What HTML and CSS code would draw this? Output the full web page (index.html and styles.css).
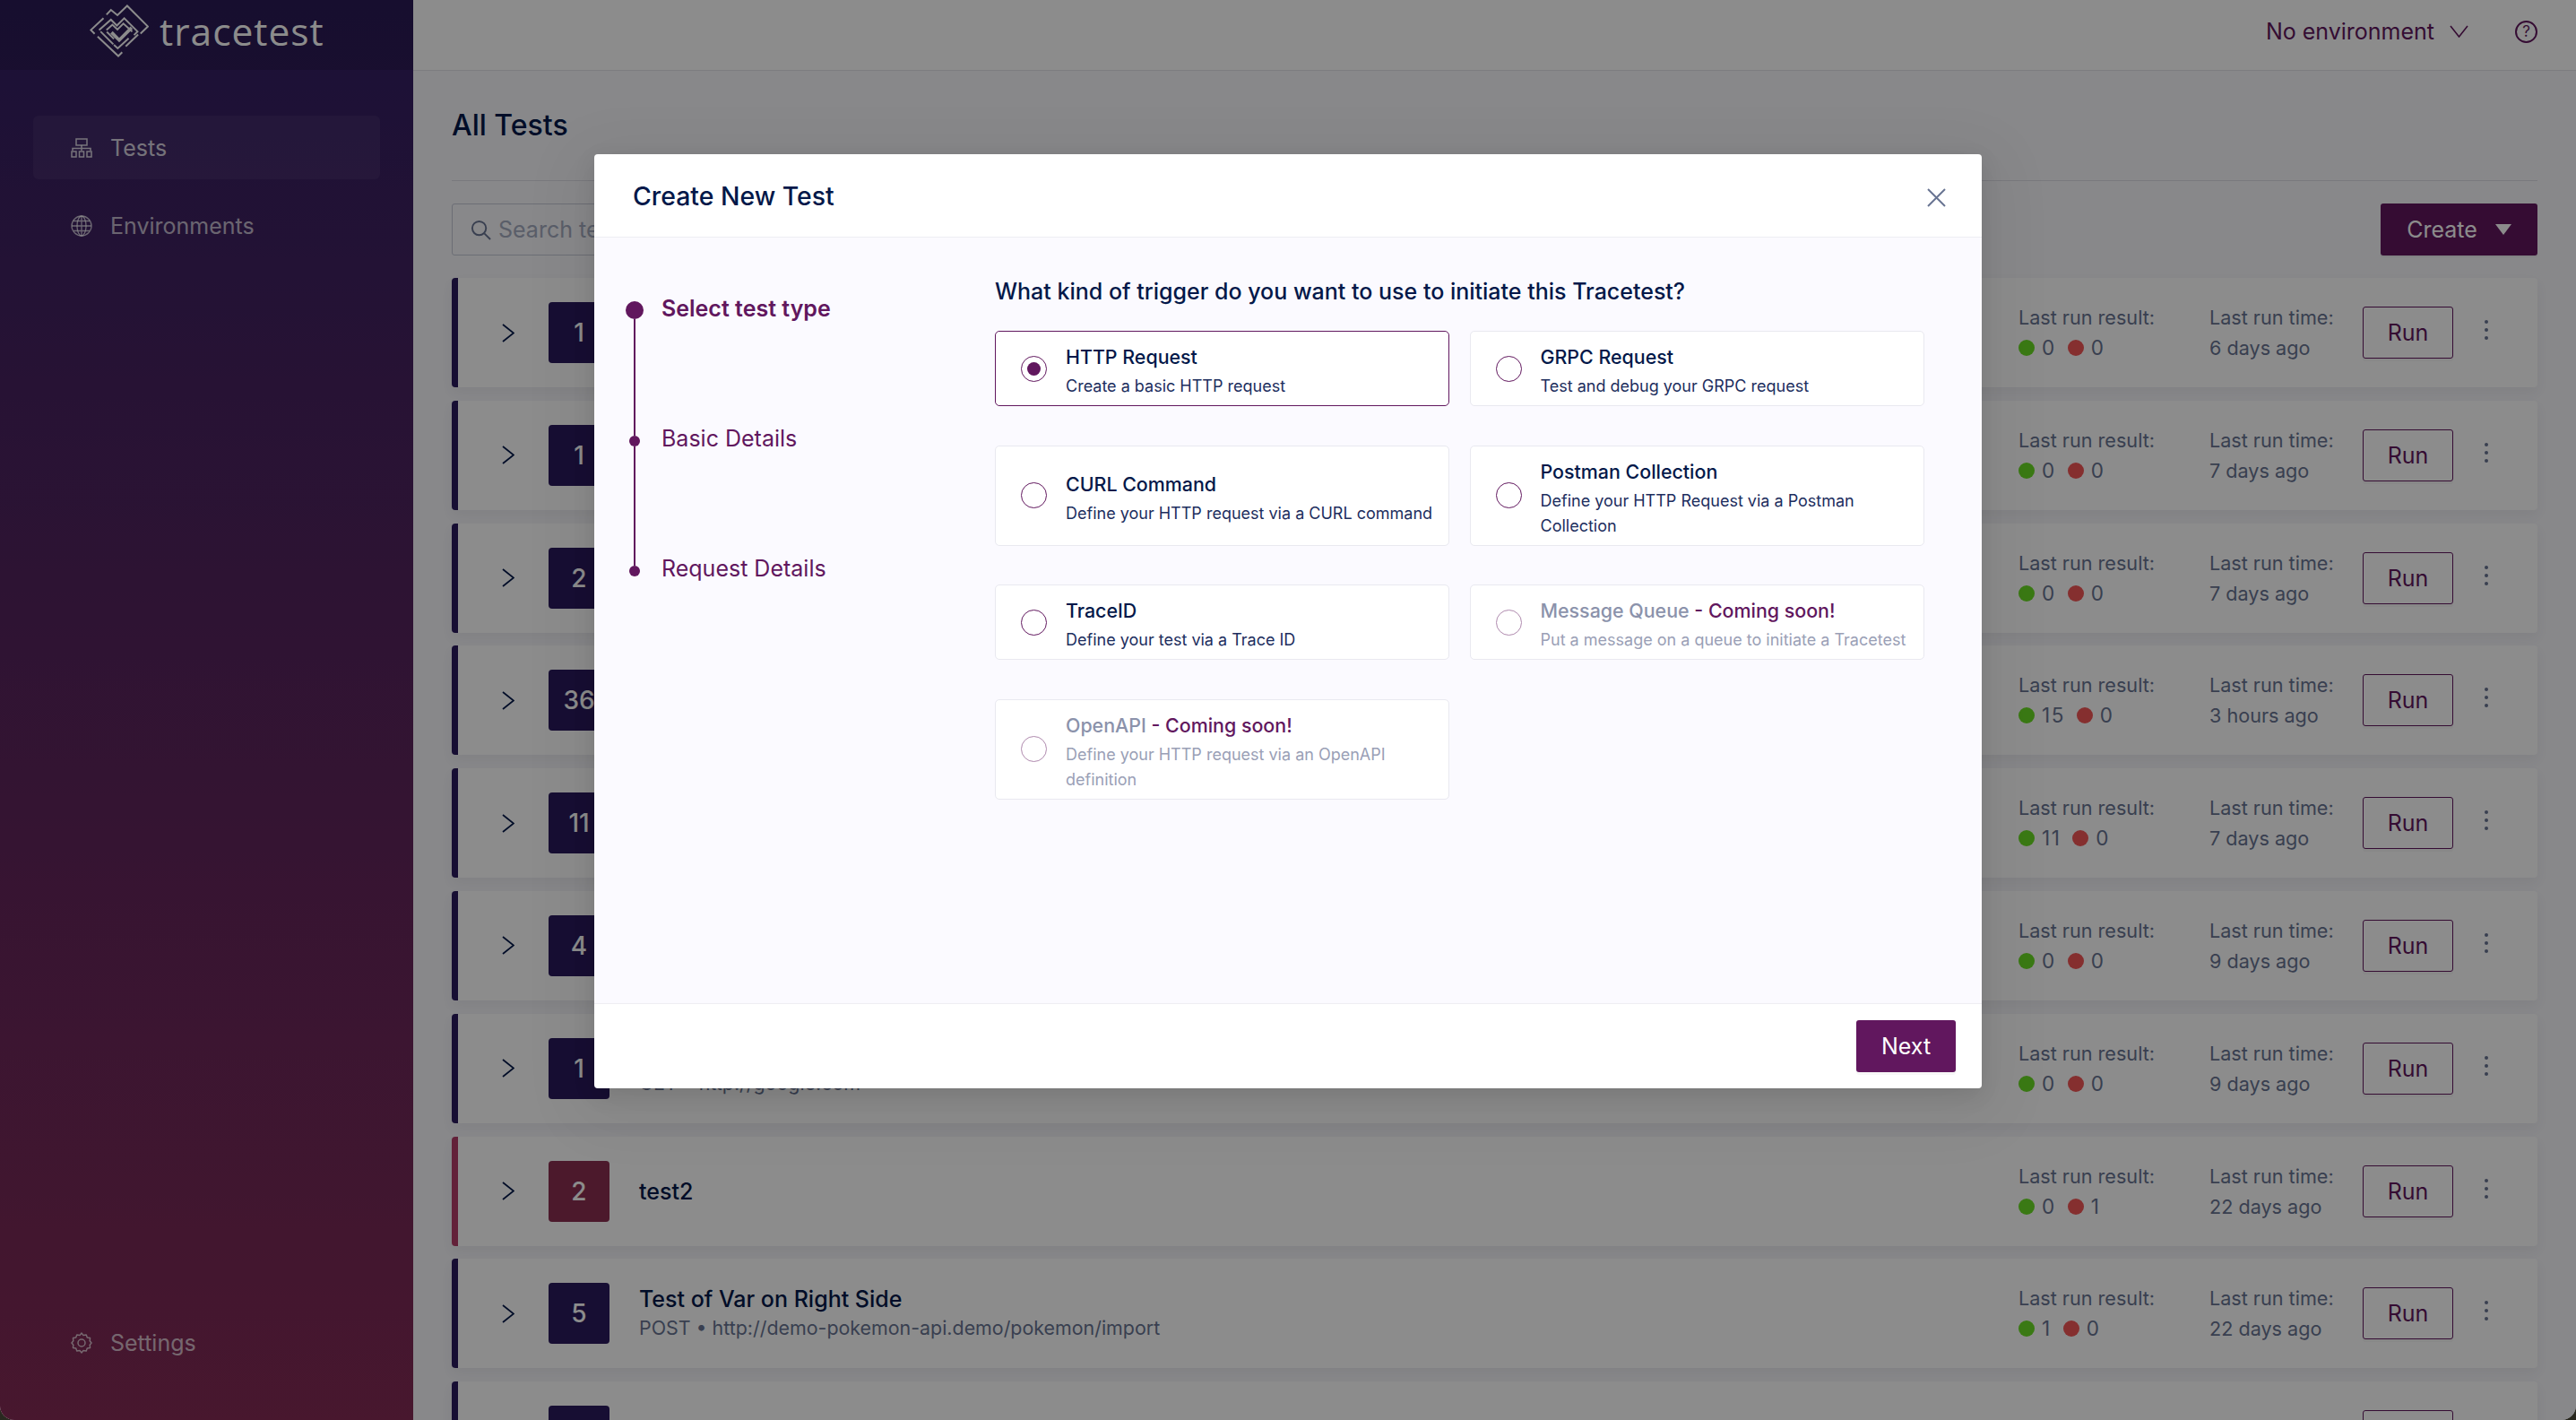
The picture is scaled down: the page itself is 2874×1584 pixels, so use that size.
FILE: index.html
```html
<!DOCTYPE html>
<html lang="en">
<head>
<meta charset="UTF-8">
<meta name="viewport" content="width=device-width, initial-scale=1.0">
<title>Tracetest</title>
<link rel="stylesheet" href="styles.css">
</head>
<body>
<div class="app">
  <aside class="sidebar">
    <div class="logo">
      <svg class="logo-mark" viewBox="118 14 200 178" fill="none" stroke="#fff" stroke-width="6">
        <path d="M175 48 L190 32 L212 50 L245 18 L315 88 L290 112"/>
        <path d="M165 60 L122 100 L135 113"/>
        <path d="M145 122 L215 188 L228 175"/>
        <path d="M240 155 L282 115"/>
        <path d="M150 100 L190 65 L210 85 L235 60 L280 105 L268 117"/>
        <path d="M155 105 L198 148"/>
        <path d="M200 150 L213 162 L250 128"/>
        <path d="M175 100 L195 82 L212 98 L232 78 L262 105"/>
        <path d="M176 106 L200 130"/>
        <path d="M192 108 L218 134 L260 92" stroke-width="11"/>
      </svg>
      <span class="logo-text">tracetest</span>
    </div>
    <nav class="nav">
      <a class="nav-item active">
        <svg class="nav-icon" viewBox="0 0 24 24" fill="none" stroke="currentColor" stroke-width="1.5">
          <rect x="6" y="2" width="12" height="7"/>
          <path d="M2 15 V12.5 H22 V15 M12 9 V15"/>
          <rect x="1" y="16" width="5" height="6"/>
          <rect x="9.5" y="16" width="5" height="6"/>
          <rect x="18" y="16" width="5" height="6"/>
        </svg>
        Tests
      </a>
      <a class="nav-item">
        <svg class="nav-icon" viewBox="0 0 24 24" fill="none" stroke="currentColor" stroke-width="1.3">
          <circle cx="12" cy="12" r="11"/>
          <ellipse cx="12" cy="12" rx="5" ry="11"/>
          <path d="M12 1 V23 M1 12 H23 M3 6.5 H21 M3 17.5 H21"/>
        </svg>
        Environments
      </a>
    </nav>
    <a class="nav-item settings">
      <svg class="nav-icon" viewBox="0 0 24 24" fill="none" stroke="currentColor" stroke-width="1.5">
        <path d="M12 1 L14 3.6 L17.2 3 L18.3 6.1 L21.5 6.6 L21.2 9.8 L23 12 L21.2 14.2 L21.5 17.4 L18.3 17.9 L17.2 21 L14 20.4 L12 23 L10 20.4 L6.8 21 L5.7 17.9 L2.5 17.4 L2.8 14.2 L1 12 L2.8 9.8 L2.5 6.6 L5.7 6.1 L6.8 3 L10 3.6 Z" stroke-linejoin="round"/>
        <circle cx="12" cy="12" r="4"/>
      </svg>
      Settings
    </a>
  </aside>

  <main class="main">
    <header class="topbar">
      <span class="env">No environment</span>
      <svg class="env-arrow" viewBox="0 0 21 14" fill="none" stroke="currentColor" stroke-width="1.6"><path d="M1 1 L10.5 13 L20 1"/></svg>
      <span class="help">?</span>
    </header>

    <div class="content">
      <h1 class="page-title">All Tests</h1>
      <div class="toolbar">
        <div class="search">
          <svg class="search-icon" viewBox="0 0 24 24" fill="none" stroke="currentColor" stroke-width="2"><circle cx="10" cy="10" r="8"/><path d="M16 16 L23 23"/></svg>
          Search test
        </div>
        <button class="btn-create">Create <span class="caret"></span></button>
      </div>

      <div class="list">
        <div class="row">
          <svg class="chevron" viewBox="0 0 14 21" fill="none" stroke="currentColor" stroke-width="1.8"><path d="M1 1 L13 10.5 L1 20"/></svg>
          <div class="badge">1</div>
          <div class="info"></div>
          <div class="result"><div>Last run result:</div><div class="counts"><i class="dot ok"></i>0<i class="dot bad"></i>0</div></div>
          <div class="time"><div>Last run time:</div><div class="ago">6 days ago</div></div>
          <button class="btn-run">Run</button>
          <div class="more"><i></i><i></i><i></i></div>
        </div>
        <div class="row">
          <svg class="chevron" viewBox="0 0 14 21" fill="none" stroke="currentColor" stroke-width="1.8"><path d="M1 1 L13 10.5 L1 20"/></svg>
          <div class="badge">1</div>
          <div class="info"></div>
          <div class="result"><div>Last run result:</div><div class="counts"><i class="dot ok"></i>0<i class="dot bad"></i>0</div></div>
          <div class="time"><div>Last run time:</div><div class="ago">7 days ago</div></div>
          <button class="btn-run">Run</button>
          <div class="more"><i></i><i></i><i></i></div>
        </div>
        <div class="row">
          <svg class="chevron" viewBox="0 0 14 21" fill="none" stroke="currentColor" stroke-width="1.8"><path d="M1 1 L13 10.5 L1 20"/></svg>
          <div class="badge">2</div>
          <div class="info"></div>
          <div class="result"><div>Last run result:</div><div class="counts"><i class="dot ok"></i>0<i class="dot bad"></i>0</div></div>
          <div class="time"><div>Last run time:</div><div class="ago">7 days ago</div></div>
          <button class="btn-run">Run</button>
          <div class="more"><i></i><i></i><i></i></div>
        </div>
        <div class="row">
          <svg class="chevron" viewBox="0 0 14 21" fill="none" stroke="currentColor" stroke-width="1.8"><path d="M1 1 L13 10.5 L1 20"/></svg>
          <div class="badge">36</div>
          <div class="info"></div>
          <div class="result"><div>Last run result:</div><div class="counts"><i class="dot ok"></i>15<i class="dot bad"></i>0</div></div>
          <div class="time"><div>Last run time:</div><div class="ago">3 hours ago</div></div>
          <button class="btn-run">Run</button>
          <div class="more"><i></i><i></i><i></i></div>
        </div>
        <div class="row">
          <svg class="chevron" viewBox="0 0 14 21" fill="none" stroke="currentColor" stroke-width="1.8"><path d="M1 1 L13 10.5 L1 20"/></svg>
          <div class="badge">11</div>
          <div class="info"></div>
          <div class="result"><div>Last run result:</div><div class="counts"><i class="dot ok"></i>11<i class="dot bad"></i>0</div></div>
          <div class="time"><div>Last run time:</div><div class="ago">7 days ago</div></div>
          <button class="btn-run">Run</button>
          <div class="more"><i></i><i></i><i></i></div>
        </div>
        <div class="row">
          <svg class="chevron" viewBox="0 0 14 21" fill="none" stroke="currentColor" stroke-width="1.8"><path d="M1 1 L13 10.5 L1 20"/></svg>
          <div class="badge">4</div>
          <div class="info"></div>
          <div class="result"><div>Last run result:</div><div class="counts"><i class="dot ok"></i>0<i class="dot bad"></i>0</div></div>
          <div class="time"><div>Last run time:</div><div class="ago">9 days ago</div></div>
          <button class="btn-run">Run</button>
          <div class="more"><i></i><i></i><i></i></div>
        </div>
        <div class="row">
          <svg class="chevron" viewBox="0 0 14 21" fill="none" stroke="currentColor" stroke-width="1.8"><path d="M1 1 L13 10.5 L1 20"/></svg>
          <div class="badge">1</div>
          <div class="info"><div class="info-title"></div><div class="info-sub">GET • http://google.com</div></div>
          <div class="result"><div>Last run result:</div><div class="counts"><i class="dot ok"></i>0<i class="dot bad"></i>0</div></div>
          <div class="time"><div>Last run time:</div><div class="ago">9 days ago</div></div>
          <button class="btn-run">Run</button>
          <div class="more"><i></i><i></i><i></i></div>
        </div>
        <div class="row failed">
          <svg class="chevron" viewBox="0 0 14 21" fill="none" stroke="currentColor" stroke-width="1.8"><path d="M1 1 L13 10.5 L1 20"/></svg>
          <div class="badge">2</div>
          <div class="info"><div class="info-title">test2</div></div>
          <div class="result"><div>Last run result:</div><div class="counts"><i class="dot ok"></i>0<i class="dot bad"></i>1</div></div>
          <div class="time"><div>Last run time:</div><div class="ago">22 days ago</div></div>
          <button class="btn-run">Run</button>
          <div class="more"><i></i><i></i><i></i></div>
        </div>
        <div class="row">
          <svg class="chevron" viewBox="0 0 14 21" fill="none" stroke="currentColor" stroke-width="1.8"><path d="M1 1 L13 10.5 L1 20"/></svg>
          <div class="badge">5</div>
          <div class="info"><div class="info-title">Test of Var on Right Side</div><div class="info-sub">POST • http://demo-pokemon-api.demo/pokemon/import</div></div>
          <div class="result"><div>Last run result:</div><div class="counts"><i class="dot ok"></i>1<i class="dot bad"></i>0</div></div>
          <div class="time"><div>Last run time:</div><div class="ago">22 days ago</div></div>
          <button class="btn-run">Run</button>
          <div class="more"><i></i><i></i><i></i></div>
        </div>
        <div class="row">
          <svg class="chevron" viewBox="0 0 14 21" fill="none" stroke="currentColor" stroke-width="1.8"><path d="M1 1 L13 10.5 L1 20"/></svg>
          <div class="badge"></div>
          <div class="info"><div class="info-title">Pokeshop - Import</div></div>
          <div class="result"><div>Last run result:</div></div>
          <div class="time"><div>Last run time:</div></div>
          <button class="btn-run">Run</button>
          <div class="more"><i></i><i></i><i></i></div>
        </div>
      </div>
    </div>
  </main>
</div>

<div class="mask">
  <div class="modal">
    <div class="modal-head">
      <h2 class="modal-title">Create New Test</h2>
      <svg class="modal-close" viewBox="0 0 21 21" fill="none" stroke="currentColor" stroke-width="2"><path d="M1 1 L20 20 M20 1 L1 20"/></svg>
    </div>
    <div class="modal-body">
      <div class="steps">
        <div class="step current">
          <div class="step-track"><span class="step-dot"></span><span class="step-line"></span></div>
          <div class="step-label">Select test type</div>
        </div>
        <div class="step">
          <div class="step-track"><span class="step-dot"></span><span class="step-line"></span></div>
          <div class="step-label">Basic Details</div>
        </div>
        <div class="step">
          <div class="step-track"><span class="step-dot"></span></div>
          <div class="step-label">Request Details</div>
        </div>
      </div>
      <div class="trigger">
        <h3 class="question">What kind of trigger do you want to use to initiate this Tracetest?</h3>
        <div class="options">
          <div class="option selected">
            <span class="radio"><span class="radio-fill"></span></span>
            <div class="option-text"><div class="option-name">HTTP Request</div><div class="option-desc">Create a basic HTTP request</div></div>
          </div>
          <div class="option">
            <span class="radio"></span>
            <div class="option-text"><div class="option-name">GRPC Request</div><div class="option-desc">Test and debug your GRPC request</div></div>
          </div>
          <div class="option">
            <span class="radio"></span>
            <div class="option-text"><div class="option-name">CURL Command</div><div class="option-desc">Define your HTTP request via a CURL command</div></div>
          </div>
          <div class="option">
            <span class="radio"></span>
            <div class="option-text"><div class="option-name">Postman Collection</div><div class="option-desc">Define your HTTP Request via a Postman Collection</div></div>
          </div>
          <div class="option">
            <span class="radio"></span>
            <div class="option-text"><div class="option-name">TraceID</div><div class="option-desc">Define your test via a Trace ID</div></div>
          </div>
          <div class="option disabled">
            <span class="radio"></span>
            <div class="option-text"><div class="option-name">Message Queue <b>- Coming soon!</b></div><div class="option-desc">Put a message on a queue to initiate a Tracetest</div></div>
          </div>
          <div class="option disabled">
            <span class="radio"></span>
            <div class="option-text"><div class="option-name">OpenAPI <b>- Coming soon!</b></div><div class="option-desc">Define your HTTP request via an OpenAPI definition</div></div>
          </div>
        </div>
      </div>
    </div>
    <div class="modal-foot">
      <button class="btn-next">Next</button>
    </div>
  </div>
</div>
</body>
</html>
```

FILE: styles.css
```css
html {
  height: 100%;
  overflow: hidden;
  background-color: #29281f;
}
body {
  margin: 0;
  height: 1584px;
  overflow: hidden;
  border-radius: 0 0 16px 16px;
  font-family: Inter, "Liberation Sans", sans-serif;
  font-size: 25px;
  color: #031849;
  background-color: #f7f7fb;
  position: relative;
}
h1, h2, h3 {
  margin: 0;
}
button {
  font-family: inherit;
  cursor: pointer;
}

.app {
  display: flex;
  height: 1584px;
}

/* sidebar */
.sidebar {
  width: 461px;
  flex: none;
  display: flex;
  flex-direction: column;
  color: rgba(255, 255, 255, 0.7);
  background: linear-gradient(#311f64, #832a55);
}
.logo {
  height: 78px;
  display: flex;
  align-items: center;
  padding-left: 100px;
  gap: 12px;
  background-color: rgba(0, 0, 0, 0.12);
  color: #fff;
}
.logo-mark {
  width: 66px;
  height: 59px;
  margin-top: -10px;
}
.logo-text {
  font-family: "Open Sans", sans-serif;
  font-size: 42.5px;
  font-weight: 500;
  line-height: 44px;
  letter-spacing: 1px;
  margin-top: -8px;
}
.nav {
  flex: 1;
  padding: 51px 37px 0;
  display: flex;
  flex-direction: column;
  gap: 16px;
}
.nav-item {
  height: 71px;
  display: flex;
  align-items: center;
  gap: 20px;
  padding-left: 42px;
  border-radius: 6px;
}
.nav-item.active {
  background-color: rgba(255, 255, 255, 0.05);
  color: rgba(255, 255, 255, 0.8);
}
.nav-icon {
  width: 24px;
  height: 24px;
}
.settings {
  margin: 0 37px 51px;
}

/* page */
.main {
  flex: 1;
  min-width: 0;
}
.topbar {
  height: 78px;
  display: flex;
  align-items: center;
  justify-content: flex-end;
  padding-right: 43px;
  background-color: #fff;
  border-bottom: 1px solid #e4e4ea;
  color: #61175e;
}
.env {
  margin-bottom: 8px;
}
.env-arrow {
  width: 21px;
  height: 14px;
  margin: 0 52px 8px 17px;
}
.help {
  width: 25px;
  height: 25px;
  border: 2px solid #61175e;
  border-radius: 50%;
  box-sizing: border-box;
  font-size: 17px;
  margin-bottom: 8px;
  display: flex;
  align-items: center;
  justify-content: center;
}
.content {
  padding: 0 43px;
}
.page-title {
  font-size: 32px;
  line-height: 44px;
  font-weight: 500;
  padding: 39px 0 39px;
  border-bottom: 1px solid #dcdce4;
}
.toolbar {
  display: flex;
  justify-content: space-between;
  margin: 25px 0;
}
.search {
  width: 640px;
  height: 58px;
  box-sizing: border-box;
  border: 1px solid #c5c8d6;
  border-radius: 3px;
  display: flex;
  align-items: center;
  gap: 8px;
  padding-left: 20px;
  color: #a5abc0;
}
.search-icon {
  width: 23px;
  height: 23px;
  color: #687492;
}
.btn-create {
  width: 175px;
  height: 58px;
  border: none;
  border-radius: 3px;
  background-color: #61175e;
  color: #fff;
  font-size: 25px;
  display: flex;
  align-items: center;
  justify-content: center;
  gap: 20px;
  box-shadow: 0 2px 0 rgba(0, 0, 0, 0.04);
}
.caret {
  width: 0;
  height: 0;
  border-left: 9px solid transparent;
  border-right: 9px solid transparent;
  border-top: 12px solid #fff;
}

/* test rows */
.list {
  display: flex;
  flex-direction: column;
  gap: 14.8px;
}
.row {
  height: 122px;
  flex: none;
  box-sizing: border-box;
  display: flex;
  align-items: center;
  padding-right: 55px;
  background-color: #fff;
  border-left: 7px solid #2a1b5d;
  border-radius: 4px;
  box-shadow: 0 6px 14px rgba(9, 14, 40, 0.05);
}
.row.failed {
  border-left-color: #b53c68;
}
.chevron {
  width: 14px;
  height: 21px;
  flex: none;
  margin: 0 38px 0 49px;
}
.badge {
  width: 68px;
  height: 68px;
  flex: none;
  border-radius: 4px;
  background-color: #2a1b5d;
  color: #fff;
  font-size: 28px;
  font-weight: 500;
  display: flex;
  align-items: center;
  justify-content: center;
}
.row.failed .badge {
  background-color: #8a2f50;
}
.info {
  flex: 1;
  min-width: 0;
  margin-left: 33px;
}
.info-title {
  font-weight: 500;
  line-height: 32px;
  min-height: 32px;
}
.info-sub {
  font-size: 21.4px;
  line-height: 32px;
  color: #687492;
}
.result {
  width: 213px;
  flex: none;
  font-size: 21.6px;
  line-height: 34px;
  color: #687492;
}
.counts {
  display: flex;
  align-items: center;
  font-size: 22.5px;
  letter-spacing: 1.5px;
}
.dot {
  width: 18px;
  height: 18px;
  border-radius: 50%;
  margin-right: 8px;
}
.dot.ok {
  background-color: #6bdc25;
}
.dot.bad {
  background-color: #f25656;
  margin-left: 13px;
}
.time {
  width: 171px;
  flex: none;
  font-size: 21.6px;
  line-height: 34px;
  color: #687492;
}
.btn-run {
  width: 101px;
  height: 58px;
  flex: none;
  box-sizing: border-box;
  border: 1.5px solid #61175e;
  border-radius: 3px;
  background-color: #fff;
  color: #61175e;
  font-size: 25px;
  box-shadow: 0 3px 0 rgba(0, 0, 0, 0.03);
}
.more {
  margin-left: 35px;
  margin-top: -6px;
  display: flex;
  flex-direction: column;
  gap: 5px;
}
.more i {
  width: 4px;
  height: 4px;
  border-radius: 50%;
  background-color: #687492;
}

/* modal */
.mask {
  position: absolute;
  top: 0;
  left: 0;
  right: 0;
  bottom: 0;
  background-color: rgba(0, 0, 0, 0.45);
  display: flex;
  justify-content: center;
  align-items: flex-start;
  padding-top: 172px;
  box-sizing: border-box;
}
.modal {
  width: 1548px;
  height: 1042px;
  display: flex;
  flex-direction: column;
  background-color: #fff;
  border-radius: 4px;
  box-shadow: 0 8px 24px rgba(0, 0, 0, 0.1), 0 16px 70px 20px rgba(0, 0, 0, 0.05);
}
.modal-head {
  height: 93px;
  flex: none;
  box-sizing: border-box;
  border-bottom: 1px solid #eeeef3;
  display: flex;
  align-items: center;
  justify-content: space-between;
  padding: 0 40px 0 43px;
}
.modal-title {
  font-size: 28.4px;
  font-weight: 500;
}
.modal-close {
  width: 21px;
  height: 21px;
  color: #687492;
  margin-top: 5px;
}
.modal-body {
  flex: 1;
  display: flex;
  background-color: #fbfaff;
}
.steps {
  width: 412px;
  flex: none;
  box-sizing: border-box;
  padding: 71px 0 0 35px;
}
.step {
  display: flex;
  gap: 20px;
  height: 145px;
  color: #61175e;
}
.step.current {
  height: 150px;
  font-weight: 600;
}
.step-track {
  width: 20px;
  display: flex;
  flex-direction: column;
  align-items: center;
}
.step-dot {
  width: 12px;
  height: 12px;
  flex: none;
  border-radius: 50%;
  background-color: #61175e;
}
.current .step-dot {
  width: 20px;
  height: 20px;
}
.step-line {
  width: 2px;
  flex: 1;
  background-color: #61175e;
}
.step-label {
  line-height: 32px;
  margin-top: -13px;
}
.current .step-label {
  margin-top: -8px;
}
.trigger {
  flex: 1;
  padding: 44px 65px 0 35px;
}
.question {
  font-size: 25px;
  line-height: 32px;
  font-weight: 500;
  margin-bottom: 28px;
}
.options {
  display: grid;
  grid-template-columns: 507px 507px;
  column-gap: 22.5px;
  row-gap: 43.5px;
}
.option {
  display: flex;
  align-items: center;
  gap: 21px;
  padding: 0 8px 0 28px;
  background-color: #fff;
  border: 1px solid #e9e9f0;
  border-radius: 5px;
  box-sizing: border-box;
}
.option.selected {
  border-color: #61175e;
}
.radio {
  width: 29px;
  height: 29px;
  flex: none;
  box-sizing: border-box;
  border: 1.5px solid #61175e;
  border-radius: 50%;
  display: flex;
  align-items: center;
  justify-content: center;
  background-color: #fff;
}
.radio-fill {
  width: 15px;
  height: 15px;
  border-radius: 50%;
  background-color: #61175e;
}
.option-text {
  padding: 13px 0 7px;
}
.option-name {
  font-size: 21.4px;
  line-height: 30px;
  font-weight: 500;
  margin-bottom: 4px;
}
.option-desc {
  font-size: 18px;
  line-height: 28px;
  color: #1d2e5e;
}
.option.disabled .radio {
  opacity: 0.5;
}
.option.disabled .option-name {
  color: #8b92ab;
}
.option.disabled .option-name b {
  color: #61175e;
  font-weight: 500;
}
.option.disabled .option-desc {
  color: #9aa0b6;
}
.modal-foot {
  height: 95px;
  flex: none;
  box-sizing: border-box;
  border-top: 1px solid #eeeef3;
  padding: 18px 29px 0 0;
  display: flex;
  justify-content: flex-end;
  align-items: flex-start;
}
.btn-next {
  width: 111px;
  height: 58px;
  border: none;
  border-radius: 3px;
  background-color: #61175e;
  color: #fff;
  font-size: 25px;
  box-shadow: 0 3px 0 rgba(0, 0, 0, 0.03);
}
```
